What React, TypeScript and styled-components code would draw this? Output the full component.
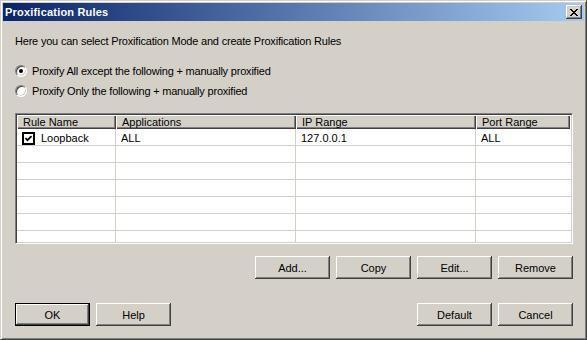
import styled, { createGlobalStyle } from "styled-components";

const GlobalStyle = createGlobalStyle`
  html, body {
    margin: 0;
    padding: 0;
    background: #d4d0c8;
  }
  body {
    font-family: "Liberation Sans", Arial, sans-serif;
    font-size: 11px;
    color: #000;
  }
  * {
    box-sizing: border-box;
  }
`;

const columns = ["Rule Name", "Applications", "IP Range", "Port Range"];
const rows = [
  { name: "Loopback", apps: "ALL", ip: "127.0.0.1", ports: "ALL", checked: true },
  null,
  null,
  null,
  null,
  null,
  null,
];

const CloseGlyph = () => (
  <svg width="8" height="7" viewBox="0 0 8 7">
    <path d="M0 0h2v1h1v1h2V1h1V0h2v1H7v1H6v1H5v1h1v1h1v1h1v1H6V6H5V5H3v1H2v1H0V6h1V5h1V4h1V3H2V2H1V1H0z" fill="#000" />
  </svg>
);

const CheckGlyph = () => (
  <svg width="13" height="13" viewBox="0 0 13 13">
    <rect x="1" y="1" width="11" height="11" fill="#fff" stroke="#000" strokeWidth="2" />
    <path d="M3.5 6.2l2 2 4-4" fill="none" stroke="#000" strokeWidth="1.8" />
  </svg>
);

const App = () => {
  return (
    <>
      <GlobalStyle />
      <Win.Frame>
        <Win.TitleBar>
          <Win.Title>Proxification Rules</Win.Title>
          <Win.Close>
            <CloseGlyph />
          </Win.Close>
        </Win.TitleBar>

        <Win.Body>
          <Win.Intro>Here you can select Proxification Mode and create Proxification Rules</Win.Intro>

          <Win.RadioRow $top={15}>
            <Win.Radio $on />
            <span>Proxify All except the following + manually proxified</span>
          </Win.RadioRow>
          <Win.RadioRow $top={4}>
            <Win.Radio />
            <span>Proxify Only the following + manually proxified</span>
          </Win.RadioRow>

          <List.Box>
            <List.Header>
              {columns.map((c) => (
                <List.HeadCell key={c}>{c}</List.HeadCell>
              ))}
            </List.Header>
            <List.Rows>
              {rows.map((r, i) => (
                <List.Row key={i}>
                  <List.Cell>
                    {r && (
                      <>
                        <CheckGlyph />
                        <List.Name>{r.name}</List.Name>
                      </>
                    )}
                  </List.Cell>
                  <List.Cell>{r?.apps}</List.Cell>
                  <List.Cell>{r?.ip}</List.Cell>
                  <List.Cell>{r?.ports}</List.Cell>
                </List.Row>
              ))}
            </List.Rows>
          </List.Box>

          <Win.ButtonRow $top={12}>
            <Win.Button>Add...</Win.Button>
            <Win.Button>Copy</Win.Button>
            <Win.Button>Edit...</Win.Button>
            <Win.Button>Remove</Win.Button>
          </Win.ButtonRow>

          <Win.Footer>
            <Win.Group>
              <Win.Button $default>OK</Win.Button>
              <Win.Button>Help</Win.Button>
            </Win.Group>
            <Win.Group>
              <Win.Button>Default</Win.Button>
              <Win.Button>Cancel</Win.Button>
            </Win.Group>
          </Win.Footer>
        </Win.Body>
      </Win.Frame>
    </>
  );
};

export default App;

const Win = {
  Frame: styled.div`
    width: 587px;
    height: 340px;
    background: #d4d0c8;
    border: 1px solid;
    border-color: #d4d0c8 #404040 #404040 #d4d0c8;
    box-shadow: inset 1px 1px #fff, inset -1px -1px #808080;
    padding: 2px;
    display: flex;
    flex-direction: column;
    overflow: hidden;
  `,
  TitleBar: styled.div`
    height: 18px;
    flex: none;
    display: flex;
    align-items: center;
    justify-content: space-between;
    padding: 0 2px 0 2px;
    background: linear-gradient(to right, #0a246a, #a6caf0);
  `,
  Title: styled.span`
    color: #fff;
    font-weight: bold;
    font-size: 11px;
    letter-spacing: 0.2px;
  `,
  Close: styled.div`
    width: 16px;
    height: 14px;
    display: flex;
    align-items: center;
    justify-content: center;
    background: #d4d0c8;
    box-shadow: inset -1px -1px #404040, inset 1px 1px #fff, inset -2px -2px #808080;
  `,
  Body: styled.div`
    flex: 1;
    display: flex;
    flex-direction: column;
    padding: 0 11px 0 12px;
  `,
  Intro: styled.div`
    margin-top: 14px;
    line-height: 13px;
    letter-spacing: -0.2px;
  `,
  RadioRow: styled.div<{ $top: number }>`
    margin-top: ${(p) => p.$top}px;
    height: 16px;
    display: flex;
    align-items: center;
    gap: 5px;
    letter-spacing: -0.2px;
  `,
  Radio: styled.div<{ $on?: boolean }>`
    position: relative;
    width: 12px;
    height: 12px;
    border-radius: 50%;
    background: #fff;
    border: 1px solid;
    border-color: #808080 #fff #fff #808080;
    box-shadow: inset 1px 1px #404040, inset -1px -1px #d4d0c8;
    &::after {
      content: "";
      display: ${(p) => (p.$on ? "block" : "none")};
      position: absolute;
      left: 3px;
      top: 3px;
      width: 4px;
      height: 4px;
      border-radius: 50%;
      background: #000;
    }
  `,
  ButtonRow: styled.div<{ $top: number }>`
    margin-top: ${(p) => p.$top}px;
    display: flex;
    justify-content: flex-end;
    gap: 6px;
  `,
  Footer: styled.div`
    margin-top: 24px;
    display: flex;
    justify-content: space-between;
  `,
  Group: styled.div`
    display: flex;
    gap: 6px;
  `,
  Button: styled.button<{ $default?: boolean }>`
    width: 75px;
    height: 23px;
    padding: 0;
    font-family: "Liberation Sans", Arial, sans-serif;
    font-size: 11px;
    color: #000;
    background: #d4d0c8;
    border: ${(p) => (p.$default ? "1px solid #000" : "none")};
    box-shadow: inset -1px -1px #404040, inset 1px 1px #fff, inset -2px -2px #808080;
  `,
};

const List = {
  Box: styled.div`
    margin-top: 14px;
    height: 131px;
    background: #fff;
    border: 1px solid;
    border-color: #808080 #fff #fff #808080;
    box-shadow: inset 1px 1px #404040, inset -1px -1px #d4d0c8;
    padding: 1px;
    display: flex;
    flex-direction: column;
    overflow: hidden;
  `,
  Header: styled.div`
    height: 14px;
    flex: none;
    display: grid;
    grid-template-columns: 99px 180px 180px 94px;
  `,
  HeadCell: styled.div`
    background: #d4d0c8;
    box-shadow: inset 1px 1px #fff, inset -1px -1px #404040, inset -2px -2px #808080;
    padding-left: 6px;
    line-height: 14px;
    white-space: nowrap;
    overflow: hidden;
  `,
  Rows: styled.div`
    flex: 1;
    overflow: hidden;
  `,
  Row: styled.div`
    height: 17px;
    display: grid;
    grid-template-columns: 99px 180px 180px 1fr;
    border-bottom: 1px solid #d4d0c8;
  `,
  Cell: styled.div`
    display: flex;
    align-items: center;
    padding: 2px 0 0 5px;
    border-right: 1px solid #d4d0c8;
    white-space: nowrap;
    &:last-child {
      border-right: none;
    }
  `,
  Name: styled.span`
    margin-left: 6px;
  `,
};
